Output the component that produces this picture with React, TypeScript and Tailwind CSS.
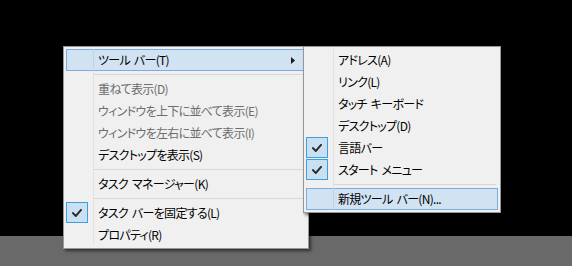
import React from 'react'

type Item =
  | { kind: 'sep' }
  | { kind: 'item'; label: string; disabled?: boolean; checked?: boolean; active?: boolean; sub?: boolean }

const mainItems: Item[] = [
  { kind: 'item', label: 'ツール バー(T)', active: true, sub: true },
  { kind: 'sep' },
  { kind: 'item', label: '重ねて表示(D)', disabled: true },
  { kind: 'item', label: 'ウィンドウを上下に並べて表示(E)', disabled: true },
  { kind: 'item', label: 'ウィンドウを左右に並べて表示(I)', disabled: true },
  { kind: 'item', label: 'デスクトップを表示(S)' },
  { kind: 'sep' },
  { kind: 'item', label: 'タスク マネージャー(K)' },
  { kind: 'sep' },
  { kind: 'item', label: 'タスク バーを固定する(L)', checked: true },
  { kind: 'item', label: 'プロパティ(R)' },
]

const toolbarItems: Item[] = [
  { kind: 'item', label: 'アドレス(A)' },
  { kind: 'item', label: 'リンク(L)' },
  { kind: 'item', label: 'タッチ キーボード' },
  { kind: 'item', label: 'デスクトップ(D)' },
  { kind: 'item', label: '言語バー', checked: true },
  { kind: 'item', label: 'スタート メニュー', checked: true },
  { kind: 'sep' },
  { kind: 'item', label: '新規ツール バー(N)...', active: true },
]

function Check() {
  return (
    <svg width="10" height="8" viewBox="0 0 10 8" fill="none">
      <path d="M1 4.2 L3.8 7 L9 1" stroke="#2b2b2b" strokeWidth="2" strokeLinecap="square" />
    </svg>
  )
}

function MenuRow({ item }: { item: Item }) {
  if (item.kind === 'sep') {
    return (
      <div className="flex h-[7px]">
        <div className="w-[27px] shrink-0" />
        <div className="flex-1 border-l border-[#e2e2e2] flex items-center pr-[2px]">
          <div className="h-px w-full bg-[#d7d7d7]" />
        </div>
      </div>
    )
  }
  return (
    <div
      className={
        'flex h-[22px] ' +
        (item.active ? 'bg-[#d1e2f2] shadow-[inset_0_0_0_1px_#7aaee3]' : '')
      }
    >
      <div className="w-[27px] shrink-0 flex items-start">
        {item.checked && (
          <div className="w-[22px] h-[21px] flex items-center justify-center bg-[#c8e0f2] border border-[#3e9ee0]">
            <Check />
          </div>
        )}
      </div>
      <div
        className={
          'flex-1 flex items-center border-l pl-[4px] ' +
          (item.active ? 'border-[#c0d3e6] ' : 'border-[#e2e2e2] ') +
          (item.disabled ? 'text-[#6d6d6d]' : 'text-black')
        }
      >
        <span className="flex-1 whitespace-nowrap [word-spacing:2px]">{item.label}</span>
        {item.sub && (
          <svg width="4" height="7" viewBox="0 0 4 7" className="mr-[11px]">
            <path d="M0 0 L4 3.5 L0 7 Z" fill="#1a1a1a" />
          </svg>
        )}
      </div>
    </div>
  )
}

function Menu({ items, className }: { items: Item[]; className: string }) {
  return (
    <div
      className={
        'absolute bg-[#f0f0f0] border border-[#979797] p-[2px] shadow-[2px_2px_3px_rgba(0,0,0,0.55)] ' +
        className
      }
    >
      {items.map((it, i) => (
        <MenuRow key={i} item={it} />
      ))}
    </div>
  )
}

export default function App() {
  return (
    <div
      className="relative w-[572px] h-[266px] flex flex-col bg-black overflow-hidden text-[12px] leading-none tracking-[-0.7px] [font-feature-settings:'palt']"
      style={{ fontFamily: '"Noto Sans CJK JP", "Noto Sans", sans-serif' }}
    >
      <div className="flex-1" />
      {/* taskbar */}
      <div className="h-[30px] bg-[#696969]" />

      <Menu items={mainItems} className="left-[63px] top-[46px] w-[246px]" />
      <Menu items={toolbarItems} className="left-[303px] top-[46px] w-[198px]" />
    </div>
  )
}
